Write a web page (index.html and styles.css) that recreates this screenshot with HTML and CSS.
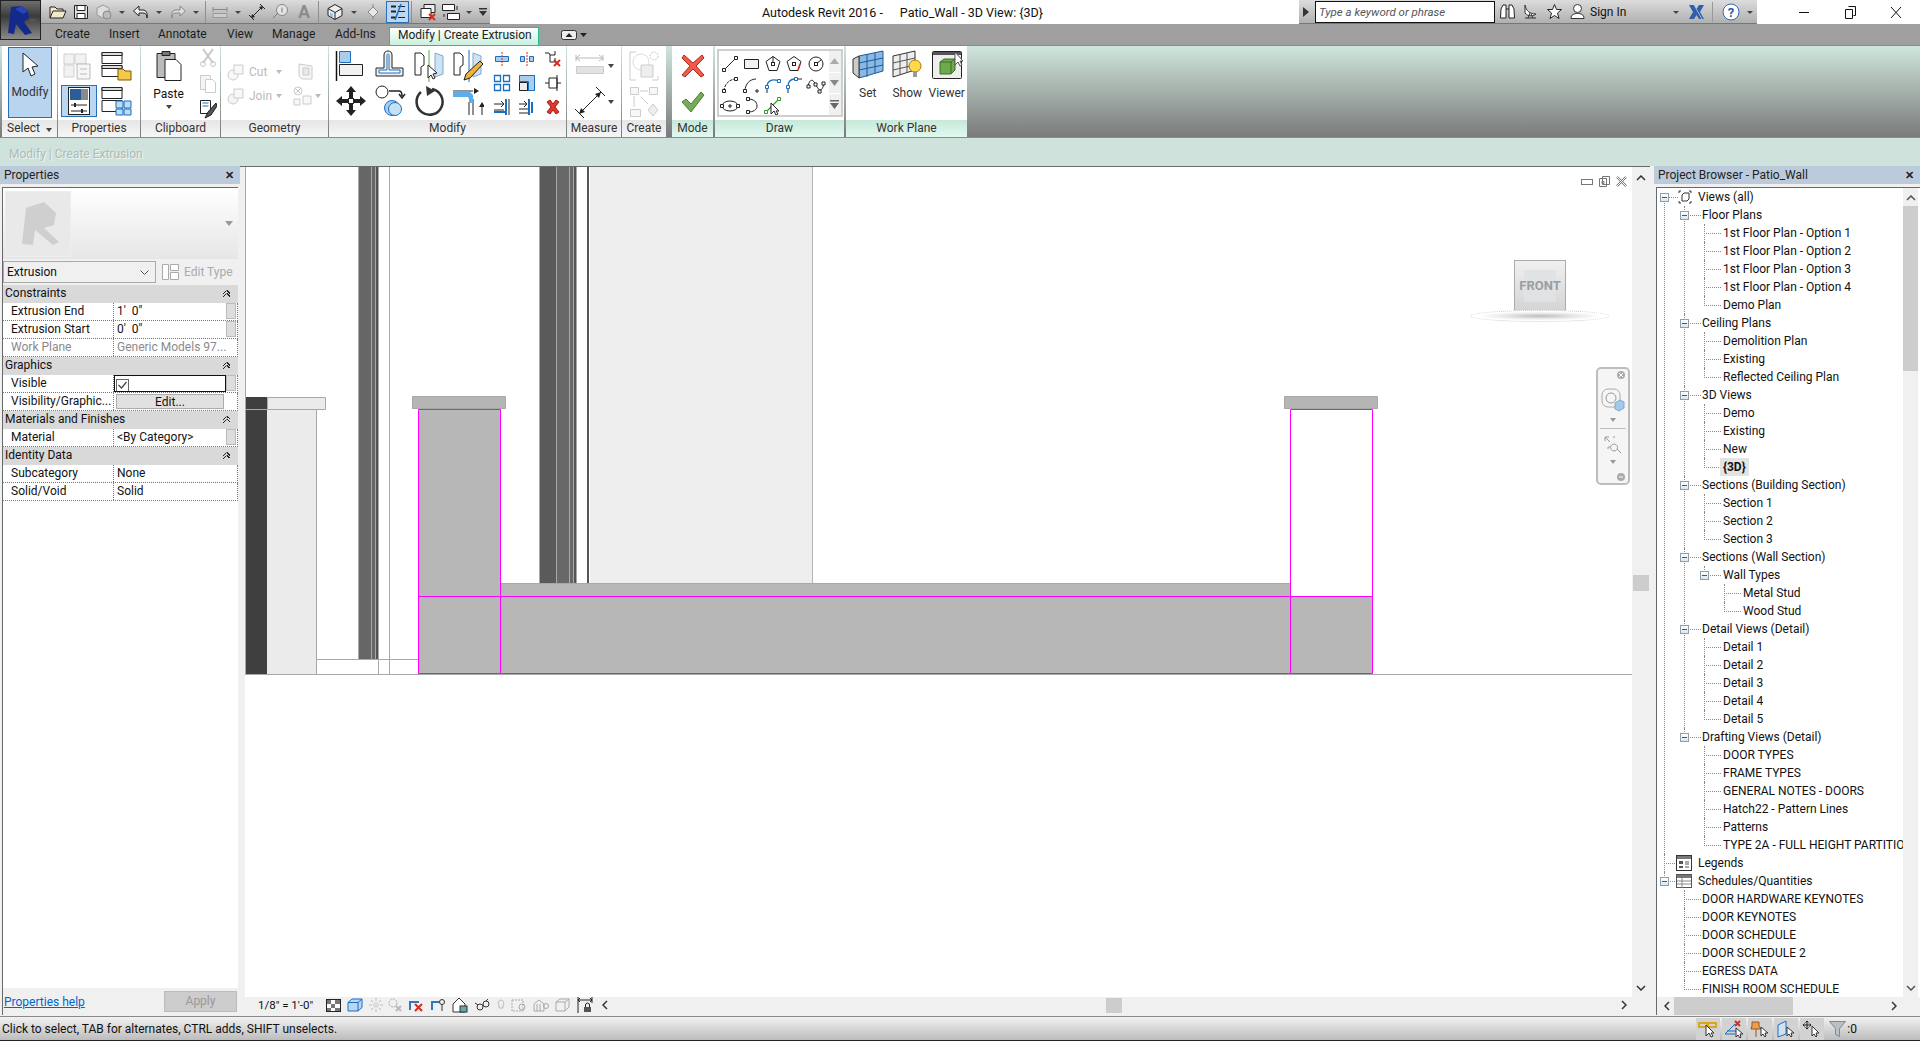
FILE: index.html
```html
<!DOCTYPE html>
<html lang="en">
<head>
  <meta charset="UTF-8">
  <title>Autodesk Revit 2016 - Patio_Wall</title>
  <link rel="stylesheet" href="styles.css">
</head>
<body>
  <!-- application button sits over title bar and tabs -->
  <div class="app-btn">
    <svg width="30" height="32" viewBox="0 0 30 32"><path d="M6 3l10-1 7 5 1 7-5 4 8 11-7 2-9-11-2 10-6-1z" fill="#13298c"/><path d="M10 5l6-3 7 5-5 3z" fill="#2a45b8"/></svg>
    <svg class="app-caret" width="8" height="5" viewBox="0 0 8 5"><path d="M0 0h8L4 5z" fill="#555"/></svg>
  </div>

  <div class="titlebar">
    <div class="qat">
      <span class="q"><svg width="18" height="16" viewBox="0 0 18 16"><path d="M1 14V3h5l2 2h6v2M1 14l3-7h13l-3 7z" fill="#f1e9c9" stroke="#222"/></svg></span>
      <span class="q"><svg width="16" height="16" viewBox="0 0 16 16"><path d="M1.500 1.500h12l1 1v12h-13z" fill="#dfe3e8" stroke="#222"/><path d="M4 1.500h8v5H4zM4 9.500h8v5H4z" fill="#fff" stroke="#222"/></svg></span>
      <span class="q"><svg width="18" height="18" viewBox="0 0 18 18"><path d="M2 5l6-3 6 3v7l-6 3-6-3z" fill="#ddd" stroke="#999"/><circle cx="12" cy="12" r="4" fill="#bbb" stroke="#888"/></svg></span>
      <span class="c"></span>
      <span class="q"><svg width="18" height="16" viewBox="0 0 18 16"><path d="M7 2L1.500 7 7 12V9h4c3 0 4 2 4 5 1-5-1-8-4-8H7z" fill="#eee" stroke="#222"/></svg></span>
      <span class="c"></span>
      <span class="q"><svg width="18" height="16" viewBox="0 0 18 16"><path d="M11 2l5.500 5L11 12V9H7c-3 0-4 2-4 5-1-5 1-8 4-8h4z" fill="#ddd" stroke="#888"/></svg></span>
      <span class="c"></span>
      <span class="qsep"></span>
      <span class="q"><svg width="18" height="16" viewBox="0 0 18 16"><path d="M2 3v5M16 3v5M2 5.500h14" stroke="#888" fill="none"/><path d="M2 9.500h14v4H2z" fill="#ccc" stroke="#999"/></svg></span>
      <span class="c"></span>
      <span class="q"><svg width="18" height="18" viewBox="0 0 18 18"><path d="M3 15L15 3M1 12l5 5M12 1l5 5" stroke="#222" fill="none"/><path d="M3 15l1-4 3 3zM15 3l-4 1 3 3z" fill="#222"/></svg></span>
      <span class="q q-w"><svg width="18" height="18" viewBox="0 0 18 18"><circle cx="11" cy="7" r="5.500" fill="#e4e4e4" stroke="#888"/><path d="M11 4.500v5M2 15l5-5" stroke="#777" fill="none"/></svg></span>
      <span class="q q-w q-a">A</span>
      <span class="qsep qsep-3d"></span>
      <span class="q q-w"><svg width="18" height="18" viewBox="0 0 18 18"><path d="M9 1.500l7 4v7l-7 4-7-4v-7z" fill="#eee" stroke="#222"/><path d="M2 5.500l7 4 7-4M9 9.500v7" stroke="#222" fill="none"/><path d="M4 9v4l3 2v-4z" fill="#9cc3e6"/></svg></span>
      <span class="c"></span>
      <span class="q"><svg width="18" height="18" viewBox="0 0 18 18"><path d="M9 4l5 5-5 5-5-5z" fill="#e8e8e8" stroke="#888"/><path d="M9 1v3M9 14v3" stroke="#888"/></svg></span>
      <span class="q q-on"><svg width="16" height="18" viewBox="0 0 16 18"><path d="M1 3.500h5M1 8.500h5M1 14.500h5" stroke="#222" stroke-width="2"/><path d="M8 3.500h7M8 8.500h7M8 14.500h7" stroke="#222"/><path d="M5 17L11 1" stroke="#1a6fc0" stroke-width="1.500"/></svg></span>
      <span class="qsep qsep-wide"></span>
      <span class="q"><svg width="18" height="18" viewBox="0 0 18 18"><path d="M5 1.500h11v8H5z" fill="#eee" stroke="#222"/><path d="M2 5.500h10v9H2z" fill="#fff" stroke="#222"/><path d="M10 11l6 6M16 11l-6 6" stroke="#d92c1c" stroke-width="2"/></svg></span>
      <span class="q"><svg width="20" height="18" viewBox="0 0 20 18"><path d="M1.500 1.500h12v6h-12zM6.500 10.500h12v6h-12z" fill="#fff" stroke="#222"/><path d="M16 3v4M3 14v-3" stroke="#222"/></svg></span>
      <span class="c"></span>
      <span class="q-custom"><svg width="10" height="10" viewBox="0 0 10 10"><path d="M1 1h8v1.500H1zM1 4h8L5 9z" fill="#333"/></svg></span>
    </div>
    <div class="title"><span>Autodesk Revit 2016 -</span><span>Patio_Wall - 3D View: {3D}</span></div>
    <div class="infocenter">
      <svg class="grip" width="6" height="10" viewBox="0 0 6 10"><path d="M0 0l6 5-6 5z" fill="#333"/></svg>
      <div class="search">Type a keyword or phrase</div>
      <span class="ib"><svg width="17" height="17" viewBox="0 0 17 17"><path d="M2 6l2-4h3v13H1.500zM15 6l-2-4h-3v13h5.500z" fill="#fff" stroke="#222"/><path d="M7 6h3" stroke="#222"/></svg></span>
      <span class="ib"><svg width="17" height="17" viewBox="0 0 17 17"><path d="M3 2c1 6 5 9 11 9-2 2-8 3-11-1zM3 15h11M8 10l-2 5M9 11l2 4" fill="#fff" stroke="#333"/></svg></span>
      <span class="ib"><svg width="17" height="17" viewBox="0 0 17 17"><path d="M8.500 1.500l2 5h5l-4 3.500 1.500 5.500-4.500-3-4.500 3L5.500 10l-4-3.500h5z" fill="#fff" stroke="#222"/></svg></span>
      <span class="ib"><svg width="17" height="17" viewBox="0 0 17 17"><circle cx="8.500" cy="5.500" r="4" fill="#fff" stroke="#333"/><path d="M2 15.500c0-4 3-5 6.500-5s6.500 1 6.500 5z" fill="#fff" stroke="#333"/></svg></span>
      <span class="signin">Sign In</span>
      <span class="ic"></span>
      <span class="ib ib-x"><svg width="17" height="16" viewBox="0 0 17 16"><path d="M1 1h5l2.500 4L11 1h5l-4 7 4 7h-5L8.500 11 6 15H1l4-7z" fill="#2f5fa8"/><path d="M6 1l8 14" stroke="#9bbbe2"/></svg></span>
      <span class="isep"></span>
      <span class="ib"><svg width="18" height="18" viewBox="0 0 18 18"><circle cx="9" cy="9" r="8" fill="#fff" stroke="#3a66b0"/><text x="9" y="13.500" class="help-q">?</text></svg></span>
      <span class="ic"></span>
    </div>
    <div class="winbtns">
      <span class="wb"><svg width="11" height="11" viewBox="0 0 11 11"><path d="M0 5.500h10" stroke="#111"/></svg></span>
      <span class="wb"><svg width="11" height="13" viewBox="0 0 11 13"><path d="M3.500.5h7v9h-2M.5 3.500h7v9h-7z" fill="none" stroke="#111"/></svg></span>
      <span class="wb"><svg width="12" height="13" viewBox="0 0 12 13"><path d="M1 1l10 11M11 1L1 12" stroke="#111" fill="none"/></svg></span>
    </div>
  </div>

  <div class="tabs">
    <span class="tab tab-create">Create</span>
    <span class="tab tab-insert">Insert</span>
    <span class="tab tab-annotate">Annotate</span>
    <span class="tab tab-view">View</span>
    <span class="tab tab-manage">Manage</span>
    <span class="tab tab-addins">Add-Ins</span>
    <span class="tab-active">Modify | Create Extrusion</span>
    <span class="tab-toggle"><svg width="16" height="10" viewBox="0 0 16 10"><rect x=".5" y=".5" width="15" height="9" rx="2" fill="#eee" stroke="#333"/><path d="M4.500 7l3.500-4 3.500 4z" fill="#222"/></svg></span>
    <svg width="7" height="4" viewBox="0 0 7 4"><path d="M0 0h7L3.500 4z" fill="#222"/></svg>
  </div>

  <div class="ribbon">
    <section class="panel p-select">
      <div class="panel-body">
        <div class="modify-btn">
          <svg width="18" height="26" viewBox="0 0 18 26"><path d="M2 1v19l5-4 3 8 4-2-3-7 6-1z" fill="#fff" stroke="#222"/></svg>
          <span>Modify</span>
        </div>
      </div>
      <div class="panel-title">Select <i class="mini-caret caret-select"></i></div>
    </section>

    <section class="panel p-props">
      <div class="panel-body props-grid">
        <span class="cell"><svg width="32" height="30" viewBox="0 0 32 30"><path d="M2 3h10v10H2zM13 3h11v10H13zM2 14h10v12H2z" fill="#f2f2f2" stroke="#cfcfcf"/><path d="M15 13h13v15H15z" fill="#f6f6f6" stroke="#bbb"/><path d="M18 18h7M18 23h7" stroke="#bbb"/></svg></span>
        <span class="cell"><svg width="32" height="30" viewBox="0 0 32 30"><path d="M2 1.500h20v11H2zM2 14.500h20v11H2z" fill="#fff" stroke="#222"/><path d="M2 1.500h20v3H2zM2 14.500h20v3H2z" fill="#ddd" stroke="#222"/><path d="M18 18h5l2 2h6v9H18z" fill="#f2c94c" stroke="#7a5b00"/></svg></span>
        <span class="cell cell-on"><svg width="24" height="30" viewBox="0 0 24 30"><rect x="1.500" y="1.500" width="21" height="27" fill="#fff" stroke="#222"/><path d="M3 3h18v11H3z" fill="#2c5d9a"/><path d="M14 3h7v11h-7z" fill="#8a8a8a"/><path d="M4 19h16M4 25h16" stroke="#222"/><path d="M8 17v4M15 23v4" stroke="#222" stroke-width="2"/></svg></span>
        <span class="cell"><svg width="32" height="30" viewBox="0 0 32 30"><path d="M2 1.500h20v11H2zM2 14.500h20v11H2z" fill="#fff" stroke="#222"/><path d="M2 1.500h20v3H2z" fill="#ddd" stroke="#222"/><path d="M16 15h7v7h-7zM24 15h7v7h-7zM16 23h7v6h-7zM24 23h7v6h-7z" fill="#bcdcf5" stroke="#1a6fc0"/></svg></span>
      </div>
      <div class="panel-title">Properties</div>
    </section>

    <section class="panel p-clip">
      <div class="panel-body clip-row">
        <div class="paste">
          <svg width="28" height="32" viewBox="0 0 28 32"><path d="M2 3.500h18v24H2z" fill="#bbb" stroke="#222"/><path d="M7 1.500h8v4H7z" fill="#777" stroke="#222"/><path d="M10 9.500h11l5 5v16H10z" fill="#fff" stroke="#222"/></svg>
          <span>Paste</span>
          <i class="mini-caret"></i>
        </div>
        <div class="clip-col">
          <svg width="18" height="20" viewBox="0 0 18 20"><path d="M4 1l10 14M14 1L4 15" stroke="#c8c8c8" stroke-width="2" fill="none"/><circle cx="4" cy="16" r="2.500" fill="none" stroke="#c8c8c8"/><circle cx="14" cy="16" r="2.500" fill="none" stroke="#c8c8c8"/></svg>
          <svg width="18" height="20" viewBox="0 0 18 20"><path d="M1.500 1.500h10v14h-10z" fill="#f4f4f4" stroke="#ccc"/><path d="M6.500 5.500h7l3 3v10h-10z" fill="#fff" stroke="#ccc"/></svg>
          <svg width="18" height="20" viewBox="0 0 18 20"><path d="M1.500 1.500h10v13h-10z" fill="#fff" stroke="#222"/><path d="M3.500 4h6M3.500 7h6" stroke="#1a6fc0"/><path d="M17 4l-8 9-3 6 6-3 6-9z" fill="#555" stroke="#222"/></svg>
        </div>
      </div>
      <div class="panel-title">Clipboard</div>
    </section>

    <section class="panel p-geo">
      <div class="panel-body geo-grid">
        <span class="geo-item"><svg width="18" height="18" viewBox="0 0 18 18"><circle cx="6" cy="12" r="5" fill="#f8f8f8" stroke="#ccc"/><path d="M7 2h9v9H7z" fill="#f8f8f8" stroke="#ccc"/></svg><span>Cut</span><i class="mini-caret off"></i></span>
        <span class="cell"><svg width="18" height="20" viewBox="0 0 18 20"><path d="M2 2l13 2v13L5 17 2 14z" fill="#f5f5f5" stroke="#ccc"/><path d="M6 6h6v7H6z" fill="#e8e8e8" stroke="#ccc"/></svg></span>
        <span class="geo-item"><svg width="18" height="18" viewBox="0 0 18 18"><circle cx="6" cy="12" r="5" fill="#f4f4f4" stroke="#ccc"/><path d="M7 2h9v9H7z" fill="#f8f8f8" stroke="#ccc"/></svg><span>Join</span><i class="mini-caret off"></i></span>
        <span class="cell cell-caret"><svg width="20" height="20" viewBox="0 0 20 20"><circle cx="6" cy="5" r="4" fill="none" stroke="#ccc"/><path d="M3 2l6 6M9 2L3 8" stroke="#ccc"/><path d="M2 13h6v6H2zM11 10h8v8h-8z" fill="#f7f7f7" stroke="#ccc"/></svg><i class="mini-caret off"></i></span>
      </div>
      <div class="panel-title">Geometry</div>
    </section>

    <section class="panel p-mod">
      <div class="panel-body mod-row">
        <div class="mod-big">
          <span class="cell"><svg width="32" height="32" viewBox="0 0 32 32"><path d="M1.500 1v30" stroke="#111" stroke-width="1.500"/><path d="M4.500 1.500h11v11h-11z" fill="#a9cdec" stroke="#1a6fc0"/><path d="M4.500 14.500h23v11h-23z" fill="#f2f2f2" stroke="#222"/></svg></span>
          <span class="cell"><svg width="32" height="32" viewBox="0 0 32 32"><path d="M2 26v-8h8V5c0-3 2-4 4-4s4 1 4 4v13h11v8z" fill="#eee" stroke="#222"/><path d="M5 23v-3h8V6c0-1 0-2 1-2s1 1 1 2v14h11v3z" fill="#fff" stroke="#1a6fc0"/></svg></span>
          <span class="cell"><svg width="32" height="32" viewBox="0 0 32 32"><path d="M2 3h6l3 3v9l-3 2v8H2z" fill="#fff" stroke="#222"/><path d="M22 3l8 3v18l-8 3z" fill="#cfe3f4" stroke="#7ea8cf"/><path d="M16 0v32" stroke="#4fae3b"/><path d="M15 15v13l3-3 2 4 2-1-2-4 4-1z" fill="#fff" stroke="#222"/></svg></span>
          <span class="cell"><svg width="32" height="32" viewBox="0 0 32 32"><path d="M2 3h6l3 3v9l-3 2v8H2z" fill="#fff" stroke="#222"/><path d="M21 3l8 3v18l-8 3z" fill="#cfe3f4" stroke="#7ea8cf"/><path d="M17 0v32" stroke="#1a6fc0"/><path d="M12 30l2-6 14-13 3 3-13 14z" fill="#f2b13a" stroke="#222"/></svg></span>
          <span class="cell"><svg width="32" height="32" viewBox="0 0 32 32"><path d="M16 1l5 6h-3v7h7v-3l6 5-6 5v-3h-7v7h3l-5 6-5-6h3v-7H7v3l-6-5 6-5v3h7V7h-3z" fill="#222"/><rect x="13.500" y="13.500" width="5" height="5" fill="#fff" stroke="#222"/></svg></span>
          <span class="cell"><svg width="32" height="32" viewBox="0 0 32 32"><circle cx="8" cy="7" r="6" fill="#fff" stroke="#222"/><path d="M15 6h10c2 0 3 2 3 5M25 9l3 4 3-4" fill="none" stroke="#222" stroke-width="1.500"/><circle cx="18" cy="23" r="7.500" fill="#a9cdec" stroke="#1a6fc0"/><circle cx="21" cy="24" r="6.500" fill="#c7e0f4" stroke="#1a6fc0"/></svg></span>
          <span class="cell"><svg width="32" height="32" viewBox="0 0 32 32"><path d="M19 4A13 13 0 1 1 8 7" fill="none" stroke="#333" stroke-width="2.500"/><path d="M13 1l9 5-8 5z" fill="#333"/></svg></span>
          <span class="cell"><svg width="32" height="32" viewBox="0 0 32 32"><path d="M1 6h20M1 10h12M21 14v16M17 17v13" stroke="#222" fill="none"/><path d="M1 6h16l4 4v8h-4v-4l-1-2H1z" fill="#5daee8"/><path d="M22 3l5 3-5 3zM27 22l3-5 3 5z" fill="#222"/><path d="M30 20v10" stroke="#222"/></svg></span>
        </div>
        <div class="mod-small">
          <span class="cell"><svg width="16" height="16" viewBox="0 0 16 16"><path d="M1.500 5.500h13v5h-13z" fill="#a9cdec" stroke="#1a6fc0"/><path d="M8 1v14" stroke="#d92c1c" stroke-dasharray="2 1"/></svg></span>
          <span class="cell"><svg width="16" height="16" viewBox="0 0 16 16"><path d="M1.500 5.500h4v5h-4zM10.500 5.500h4v5h-4z" fill="#a9cdec" stroke="#1a6fc0"/><path d="M8 1v14" stroke="#d92c1c" stroke-dasharray="2 1"/></svg></span>
          <span class="cell"><svg width="18" height="18" viewBox="0 0 18 18"><path d="M1 3h4l1 2h5V1M6 5v7h5V8" fill="none" stroke="#222"/><path d="M10 10l6 6M16 10l-6 6" stroke="#d92c1c" stroke-width="2"/></svg></span>
          <span class="cell"><svg width="18" height="18" viewBox="0 0 18 18"><path d="M1.500 1.500h6v6h-6zM10.500 1.500h6v6h-6zM1.500 10.500h6v6h-6zM10.500 10.500h6v6h-6z" fill="#fff" stroke="#1a6fc0" stroke-width="1.300"/></svg></span>
          <span class="cell"><svg width="18" height="18" viewBox="0 0 18 18"><path d="M1.500 1.500h15v15h-15z" fill="#fff" stroke="#1a6fc0"/><path d="M1.500 1.500h15v15h-6v-9h-9z" fill="#a9cdec" stroke="#1a6fc0"/><path d="M1.500 8.500h8v8h-8z" fill="#eee" stroke="#222"/></svg></span>
          <span class="cell"><svg width="18" height="18" viewBox="0 0 18 18"><path d="M1 9h4M13 9h4M5 4h8v10H5z" fill="none" stroke="#222"/><path d="M13 1v16" stroke="#222"/></svg></span>
          <span class="cell"><svg width="18" height="18" viewBox="0 0 18 18"><path d="M1 6h10M8 3l3 3-3 3M1 12h10" stroke="#222" fill="none"/><path d="M1 14h11" stroke="#1a6fc0" stroke-width="2"/><path d="M13 1v16" stroke="#1a6fc0" stroke-width="2"/><path d="M16 1v16" stroke="#222"/></svg></span>
          <span class="cell"><svg width="18" height="18" viewBox="0 0 18 18"><path d="M1 6h8M6 3l3 3-3 3M1 11h10M1 15h10" stroke="#222" fill="none"/><path d="M11 1v16M14 4v11" stroke="#1a6fc0" stroke-width="2"/></svg></span>
          <span class="cell"><svg width="16" height="16" viewBox="0 0 16 16"><path d="M2 3l3-2 3 4 3-4 3 2-4 5 4 5-3 2-3-4-3 4-3-2 4-5z" fill="#e0362b" stroke="#a61d14"/></svg></span>
        </div>
      </div>
      <div class="panel-title">Modify</div>
    </section>

    <section class="panel p-measure">
      <div class="panel-body measure-col">
        <span class="cell cell-caret"><svg width="30" height="30" viewBox="0 0 30 30"><path d="M1 7h27M1 4v6M28 4v6M5 4L1 7l4 3M24 4l4 3-4 3" stroke="#bbb" fill="none"/><path d="M1.500 15.500h27v7h-27z" fill="#e2e2e2" stroke="#ccc"/></svg><i class="mini-caret"></i></span>
        <span class="cell cell-caret"><svg width="30" height="32" viewBox="0 0 30 32"><path d="M4 28L26 6M0 23l9 9M21 1l9 9" stroke="#222" fill="none"/><path d="M4 28l2-6 4 4zM26 6l-6 2 4 4z" fill="#222"/></svg><i class="mini-caret"></i></span>
      </div>
      <div class="panel-title">Measure</div>
    </section>

    <section class="panel p-create">
      <div class="panel-body measure-col">
        <span class="cell"><svg width="32" height="32" viewBox="0 0 32 32"><path d="M8 2H2v28h6M24 30h6V26" fill="none" stroke="#ccc"/><circle cx="13" cy="12" r="8" fill="none" stroke="#ddd"/><path d="M13 15h12v12H13z" fill="#eee" stroke="#ccc"/><circle cx="26" cy="6" r="4" fill="none" stroke="#ccc" stroke-dasharray="2 1"/></svg></span>
        <span class="cell"><svg width="30" height="32" viewBox="0 0 30 32"><path d="M1.500 1.500h8v7h-8zM20.500 1.500h8v7h-8zM1.500 23.500h10v7h-10z" fill="#f7f7f7" stroke="#ccc"/><path d="M11 5h8M5 10v11M12 11l7 7" stroke="#ccc" fill="none"/><path d="M24 18l5 6-5 6-5-6z" fill="#eee" stroke="#ccc"/></svg></span>
      </div>
      <div class="panel-title">Create</div>
    </section>

    <section class="panel p-mode">
      <div class="panel-body measure-col">
        <span class="cell"><svg width="24" height="24" viewBox="0 0 24 24"><path d="M3 1l9 8 9-8 2 3-8 8 8 9-3 2-8-8-8 8-3-2 8-9-8-8z" fill="#f05a4b" stroke="#b02a1e"/></svg></span>
        <span class="cell"><svg width="24" height="22" viewBox="0 0 24 22"><path d="M1 11l4-3 5 5L20 1l3 3-13 17z" fill="#77ab5c" stroke="#4d7d36"/></svg></span>
      </div>
      <div class="panel-title panel-title-on">Mode</div>
    </section>

    <section class="panel p-draw">
      <div class="panel-body draw-body">
        <div class="gallery">
          <div class="gallery-grid">
            <svg width="18" height="18" viewBox="0 0 18 18"><path d="M3 15L15 3" stroke="#222"/><path d="M1.500 13.500h3v3h-3zM13.500 1.500h3v3h-3z" fill="#fff" stroke="#222"/></svg>
            <svg width="18" height="18" viewBox="0 0 18 18"><path d="M2.500 4.500h14v9h-14z" fill="#f2f2f2" stroke="#222"/></svg>
            <svg width="18" height="18" viewBox="0 0 18 18"><path d="M9 1.500l7 5-3 9H5l-3-9z" fill="#fff" stroke="#222"/><path d="M9 9V1.500" stroke="#222"/><rect x="7.500" y="7.500" width="3" height="3" fill="#fff" stroke="#222"/></svg>
            <svg width="18" height="18" viewBox="0 0 18 18"><path d="M9 1.500l7 5-3 9H5l-3-9z" fill="#fff" stroke="#222"/><rect x="7.500" y="7.500" width="3" height="3" fill="#fff" stroke="#222"/><path d="M15 9l-2 6" stroke="#d92c1c" stroke-width="1.500"/></svg>
            <svg width="18" height="18" viewBox="0 0 18 18"><circle cx="9" cy="9" r="7" fill="#fff" stroke="#222"/><path d="M9 9l5-4" stroke="#222"/><rect x="7.500" y="7.500" width="3" height="3" fill="#fff" stroke="#222"/></svg>
            <svg width="18" height="18" viewBox="0 0 18 18"><path d="M3 15C3 9 8 3 15 3" fill="none" stroke="#222" stroke-dasharray="3 1"/><path d="M1.500 13.500h3v3h-3zM13.500 1.500h3v3h-3z" fill="#fff" stroke="#222"/></svg>
            <svg width="18" height="18" viewBox="0 0 18 18"><path d="M3 15C3 8 8 3 14 3" fill="none" stroke="#222"/><path d="M1.500 13.500h3v3h-3z" fill="#fff" stroke="#222"/><path d="M13 15h4M15 13v4" stroke="#222"/></svg>
            <svg width="18" height="18" viewBox="0 0 18 18"><path d="M3 11C3 5 8 2 15 5" fill="none" stroke="#1a6fc0" stroke-width="1.300"/><path d="M1.500 9.500h3v3h-3zM13.500 3.500h3v3h-3z" fill="#fff" stroke="#1a6fc0"/><path d="M3 13v4" stroke="#222"/></svg>
            <svg width="18" height="18" viewBox="0 0 18 18"><path d="M3 11C3 6 5 3 10 3" fill="none" stroke="#1a6fc0" stroke-width="1.300"/><path d="M1.500 9.500h3v3h-3zM9.500 1.500h3v3h-3z" fill="#fff" stroke="#1a6fc0"/><path d="M3 13v4M13 3h4" stroke="#222"/></svg>
            <svg width="20" height="18" viewBox="0 0 20 18"><path d="M2 10C4 2 7 3 10 9s6 8 8-2" fill="none" stroke="#222"/><path d="M1 9h3v3H1zM8 7h3v3H8zM16 6h3v3h-3zM12 14h3v3h-3z" fill="#fff" stroke="#222"/></svg>
            <svg width="20" height="16" viewBox="0 0 20 16"><ellipse cx="10" cy="8" rx="8" ry="5" fill="#fff" stroke="#222"/><path d="M8 8h4M10 6v4" stroke="#222"/><path d="M0.500 6.500h3v3h-3zM16.500 6.500h3v3h-3z" fill="#fff" stroke="#222"/></svg>
            <svg width="18" height="18" viewBox="0 0 18 18"><path d="M6 2c6 0 9 3 9 7s-4 6-9 6" fill="none" stroke="#222"/><path d="M4.500 .5h3v3h-3zM4.500 13.500h3v3h-3z" fill="#fff" stroke="#222"/></svg>
            <svg width="20" height="18" viewBox="0 0 20 18"><path d="M3 15L16 2" stroke="#2ea02e" stroke-width="1.300"/><path d="M1.500 13.500h3v3h-3zM14.500 .5h3v3h-3z" fill="#fff" stroke="#2ea02e"/><path d="M8 6v11l3-3 2 4 2-1-2-3h3z" fill="#fff" stroke="#222"/></svg>
          </div>
          <div class="gallery-scroll">
            <span><svg width="9" height="6" viewBox="0 0 9 6"><path d="M0 6l4.500-6L9 6z" fill="#aaa"/></svg></span>
            <span><svg width="9" height="6" viewBox="0 0 9 6"><path d="M0 0l4.500 6L9 0z" fill="#888"/></svg></span>
            <span><svg width="9" height="9" viewBox="0 0 9 9"><path d="M0 0h9v1.500H0zM0 3h9L4.500 9z" fill="#666"/></svg></span>
          </div>
        </div>
      </div>
      <div class="panel-title panel-title-on">Draw</div>
    </section>

    <section class="panel p-plane">
      <div class="panel-body plane-row">
        <div class="plane-btn">
          <svg width="32" height="30" viewBox="0 0 32 30"><path d="M7 6l24-5v20L7 28z" fill="#8cb9e3" stroke="#1a5a9a"/><path d="M1 9l6-3v22l-6-5z" fill="#ccc" stroke="#333"/><path d="M15 4v23M23 3v20M7 13l24-5M7 20l24-5" stroke="#1a5a9a" fill="none"/></svg>
          <span>Set</span>
        </div>
        <div class="plane-btn">
          <svg width="32" height="30" viewBox="0 0 32 30"><path d="M2 6l22-5v19L2 27z" fill="#eee" stroke="#333"/><path d="M9 5v20M16 3v20M2 13l22-5M2 20l22-5" stroke="#555" fill="none"/><circle cx="24" cy="16" r="6" fill="#ffd84d" stroke="#a37f00"/><path d="M22 22h4v5h-4z" fill="#999"/></svg>
          <span>Show</span>
        </div>
        <div class="plane-btn">
          <svg width="32" height="30" viewBox="0 0 32 30"><rect x="1.500" y="1.500" width="29" height="27" rx="1" fill="#eee" stroke="#222"/><path d="M2 2h28v3H2z" fill="#555"/><path d="M9 12l4-3h11v11l-4 4H9z" fill="#6ea94d" stroke="#3e6b28"/><path d="M9 12h11v12M20 12l4-3" fill="none" stroke="#3e6b28"/><path d="M24 2v13l3-3 2 4 2-1-2-4h3z" fill="#fff" stroke="#555"/></svg>
          <span>Viewer</span>
        </div>
      </div>
      <div class="panel-title panel-title-on">Work Plane</div>
    </section>
  </div>

  <div class="optionsbar">Modify | Create Extrusion</div>

  <div class="workspace">
    <aside class="props">
      <div class="dock-head"><span>Properties</span><b class="dock-x">✕</b></div>
      <div class="props-inner">
        <div class="preview">
          <div class="preview-thumb">
            <svg width="46" height="46" viewBox="0 0 46 46"><path d="M11 7l18-6 12 11-2 12-10 3 15 14-6 3-18-15-2 15-11-1z" fill="#cfcfcf"/></svg>
          </div>
          <svg class="preview-caret" width="8" height="5" viewBox="0 0 8 5"><path d="M0 0h8L4 5z" fill="#999"/></svg>
        </div>
        <div class="typeline">
          <div class="typeselect"><span>Extrusion</span><svg width="9" height="5" viewBox="0 0 9 5"><path d="M.5.5l4 4 4-4" fill="none" stroke="#555"/></svg></div>
          <div class="edittype"><svg width="17" height="16" viewBox="0 0 17 16"><path d="M.5.500h6v15h-6zM8.500.500h8v6h-8zM8.500 8.500h8v7h-8z" fill="#fff" stroke="#aaa"/></svg><span>Edit Type</span></div>
        </div>

        <div class="group">Constraints<i class="dbl"></i></div>
        <div class="prop"><span class="pn">Extrusion End</span><span class="pv">1'&nbsp; 0"</span><span class="pb"><i></i></span></div>
        <div class="prop"><span class="pn">Extrusion Start</span><span class="pv">0'&nbsp; 0"</span><span class="pb"><i></i></span></div>
        <div class="prop prop-off"><span class="pn">Work Plane</span><span class="pv">Generic Models 97...</span><span class="pb"></span></div>
        <div class="group">Graphics<i class="dbl"></i></div>
        <div class="prop"><span class="pn">Visible</span><span class="pv pv-check"><svg width="13" height="13" viewBox="0 0 13 13"><rect x=".5" y=".5" width="12" height="12" fill="#fff" stroke="#666"/><path d="M2.500 6l3 3 5-6" fill="none" stroke="#444" stroke-width="1.200"/></svg></span><span class="pb"><i></i></span></div>
        <div class="prop"><span class="pn">Visibility/Graphic...</span><span class="pv pv-btn"><span>Edit...</span></span><span class="pb"></span></div>
        <div class="group">Materials and Finishes<i class="dbl"></i></div>
        <div class="prop"><span class="pn">Material</span><span class="pv">&lt;By Category&gt;</span><span class="pb"><i></i></span></div>
        <div class="group">Identity Data<i class="dbl"></i></div>
        <div class="prop"><span class="pn">Subcategory</span><span class="pv">None</span><span class="pb"></span></div>
        <div class="prop"><span class="pn">Solid/Void</span><span class="pv">Solid</span><span class="pb"></span></div>

        <div class="props-foot">
          <a class="help-link">Properties help</a>
          <span class="apply">Apply</span>
        </div>
      </div>
    </aside>

    <main class="view">
      <div class="view-main">
        <div class="canvas">
          <svg class="drawing" width="1387" height="830" viewBox="245 167 1387 830">
            <rect x="245" y="167" width="1387" height="830" fill="#fff"/>
            <!-- far left column -->
            <path d="M246 397h21v277h-21z" fill="#3f3f3f"/>
            <path d="M267 409h49v265h-49z" fill="#ebebeb"/>
            <path d="M267.500 397.500h58v12h-58z" fill="#ebebeb" stroke="#a8a8a8"/>
            <path d="M246 409.500h21M316.500 409v265M245.500 167v507" stroke="#a8a8a8" fill="none"/>
            <!-- dark mullions -->
            <path d="M358 167h13v492h-13z" fill="#666"/>
            <path d="M372 167h3v492h-3z" fill="#666"/>
            <path d="M376 167h2v492h-2z" fill="#555"/>
            <path d="M358.500 167v492M371.500 167v492M375.500 167v492M378.500 167v507M389.500 167v507M316 659.500h102" stroke="#a8a8a8" fill="none"/>
            <path d="M539 167h17v416h-17z" fill="#5a5a5a"/>
            <path d="M557 167h12v416h-12z" fill="#686868"/>
            <path d="M570 167h3v416h-3z" fill="#686868"/>
            <path d="M574 167h2v416h-2z" fill="#555"/>
            <path d="M539.500 167v416M556.500 167v416M569.500 167v416M573.500 167v416M576.500 167v416" stroke="#a8a8a8" fill="none"/>
            <path d="M587 167h2v416h-2z" fill="#555"/>
            <path d="M590 167h222v416H590z" fill="#eee"/>
            <path d="M812.500 167v416" stroke="#b5b5b5"/>
            <!-- wall and posts -->
            <path d="M500 583h790v14H500z" fill="#b7b7b7"/>
            <path d="M500 583.500h790" stroke="#a8a8a8"/>
            <path d="M418 409h83v265h-83zM500 596h790v78H500zM1290 596h83v78h-83z" fill="#b7b7b7"/>
            <path d="M412.500 396.500h93v12h-93zM1284.500 396.500h93v12h-93z" fill="#b5b5b5" stroke="#a8a8a8"/>
            <path d="M245 674.500h1387" stroke="#a8a8a8"/>
            <path d="M418.500 409.500h82v264h-82zM418.500 596.500h954M1290.500 409.500h82v264h-82zM500.500 673.500h790" fill="none" stroke="#f0f"/>
          </svg>
          <div class="viewctl">
            <svg width="12" height="6" viewBox="0 0 12 6"><rect x=".5" y=".5" width="11" height="5" fill="#fff" stroke="#777"/></svg>
            <svg width="11" height="11" viewBox="0 0 11 11"><path d="M3.500.5h7v8h-7zM.5 2.500h7v8h-7z" fill="#fff" stroke="#777"/><path d="M3 5.500h2v2H3z" fill="none" stroke="#777"/></svg>
            <svg width="11" height="11" viewBox="0 0 11 11"><path d="M1 1l9 9M10 1l-9 9" stroke="#777" stroke-width="2.400"/><path d="M1 1l9 9M10 1l-9 9" stroke="#fff"/></svg>
          </div>
          <div class="navcube">
            <div class="cube"><span>FRONT</span></div>
            <div class="compass"></div>
          </div>
          <div class="navbar">
            <svg class="nb-close" width="8" height="8" viewBox="0 0 8 8"><circle cx="4" cy="4" r="4" fill="#aaa"/><path d="M2 2l4 4M6 2L2 6" stroke="#fff"/></svg>
            <svg width="24" height="24" viewBox="0 0 24 24"><rect x="1" y="1" width="18" height="18" rx="6" fill="none" stroke="#aaa"/><circle cx="10" cy="10" r="5" fill="none" stroke="#999"/><path d="M14 15l5-3 4 2v6l-5 3-4-2z" fill="#a6c8ea" stroke="#7ea8cf"/></svg>
            <i class="nb-caret"></i>
            <span class="nb-line"></span>
            <svg width="18" height="18" viewBox="0 0 18 18"><path d="M1 5V1h4M1 1l5 5M11 1h-2M6 11H4v2M10 8a3.500 3.500 0 1 0 .1 0M13 13l4 4" fill="none" stroke="#999"/></svg>
            <i class="nb-caret"></i>
            <svg class="nb-min" width="8" height="8" viewBox="0 0 8 8"><circle cx="4" cy="4" r="4" fill="#aaa"/><path d="M2 4h4" stroke="#fff"/></svg>
          </div>
        </div>
        <div class="vscroll">
          <svg width="10" height="6" viewBox="0 0 10 6"><path d="M1 5l4-4 4 4" fill="none" stroke="#333" stroke-width="1.500"/></svg>
          <span class="vthumb"></span>
          <svg width="10" height="6" viewBox="0 0 10 6"><path d="M1 1l4 4 4-4" fill="none" stroke="#333" stroke-width="1.500"/></svg>
        </div>
      </div>
      <div class="viewbar">
        <span class="scale">1/8" = 1'-0"</span>
        <div class="vb-icons">
          <svg width="15" height="13" viewBox="0 0 15 13"><rect x=".5" y=".5" width="14" height="12" fill="#fff" stroke="#222"/><path d="M1 1h4v4H1zM9 1h5v4H9zM5 5h4v4H5zM1 9h4v3H1zM9 9h5v3H9z" fill="#777"/></svg>
          <svg width="16" height="14" viewBox="0 0 16 14"><path d="M1 4.500l4-3.500h10v8.500L11 13H1z" fill="#b8d8f2" stroke="#1a6fc0"/><path d="M1 4.500h10V13M11 4.500L15 1" fill="none" stroke="#1a6fc0"/></svg>
          <svg width="14" height="14" viewBox="0 0 14 14"><circle cx="7" cy="7" r="3" fill="#ddd"/><path d="M7 0v3M7 11v3M0 7h3M11 7h3M2 2l2 2M10 10l2 2M12 2l-2 2M2 12l2-2" stroke="#bbb"/></svg>
          <svg width="14" height="14" viewBox="0 0 14 14"><circle cx="5" cy="5" r="4" fill="none" stroke="#aaa" stroke-dasharray="2 1"/><path d="M8 8l5 5M13 8l-5 5" stroke="#bbb" stroke-width="2"/></svg>
          <svg width="16" height="14" viewBox="0 0 16 14"><path d="M1 3h10v2H3v7H1z" fill="#3377bb"/><path d="M7 6l7 7M14 6l-7 7" stroke="#d92c1c" stroke-width="2"/></svg>
          <svg width="16" height="14" viewBox="0 0 16 14"><path d="M1 3h8v2H3v7H1z" fill="#3377bb"/><circle cx="12" cy="4" r="2.500" fill="none" stroke="#333"/><path d="M12 7v6" stroke="#333"/></svg>
          <svg width="16" height="16" viewBox="0 0 16 16"><path d="M1 7l6-6 6 6v8H1z" fill="#fff" stroke="#333"/><rect x="8" y="9" width="7" height="6" fill="#6aa" stroke="#333"/></svg>
          <svg width="16" height="14" viewBox="0 0 16 14"><circle cx="6" cy="9" r="3" fill="none" stroke="#333"/><circle cx="12" cy="6" r="3" fill="none" stroke="#333"/><path d="M1 5l3 2M14 1l-2 2" stroke="#333"/></svg>
          <svg width="10" height="14" viewBox="0 0 10 14"><path d="M5 2a3 3 0 0 1 2 5v3H3V7a3 3 0 0 1 2-5z" fill="none" stroke="#bbb"/></svg>
          <svg width="16" height="14" viewBox="0 0 16 14"><path d="M1 2h11v11H1z" fill="none" stroke="#aaa" stroke-dasharray="2 1"/><circle cx="11" cy="9" r="3" fill="none" stroke="#aaa"/></svg>
          <svg width="16" height="14" viewBox="0 0 16 14"><path d="M1 13V6l5-4 5 4v7zM4 6v7M7 6v7" fill="none" stroke="#aaa"/><circle cx="13" cy="8" r="2.500" fill="none" stroke="#aaa"/></svg>
          <svg width="16" height="14" viewBox="0 0 16 14"><path d="M1 4l4-3h9v8l-4 4H1z" fill="none" stroke="#aaa"/><path d="M1 4h9v9M10 4l4-3" fill="none" stroke="#aaa"/></svg>
          <svg width="16" height="16" viewBox="0 0 16 16"><path d="M1 0v16M15 0v6M1 3h14M3 1L1 3l2 2M13 1l2 2-2 2" fill="none" stroke="#222"/><rect x="7" y="10" width="7" height="5" fill="#555"/><path d="M8.500 10V8a2 2 0 0 1 4 0v2" fill="none" stroke="#222"/></svg>
        </div>
        <svg class="hs-left" width="6" height="10" viewBox="0 0 6 10"><path d="M5 1L1 5l4 4" fill="none" stroke="#333" stroke-width="1.500"/></svg>
        <span class="hthumb"></span>
        <svg class="hs-right" width="6" height="10" viewBox="0 0 6 10"><path d="M1 1l4 4-4 4" fill="none" stroke="#333" stroke-width="1.500"/></svg>
        <span class="corner"></span>
      </div>
    </main>

    <aside class="browser">
      <div class="dock-head"><span>Project Browser - Patio_Wall</span><b class="dock-x">✕</b></div>
      <div class="browser-inner">
        <div class="tree-wrap">
          <ul class="tree root">
            <li class="open"><div class="row"><i class="tg"></i><svg class="ti" width="14" height="14" viewBox="0 0 14 14"><path d="M1 3V1h2M11 1h2v2M1 11v2h2M13 11v2h-2" fill="none" stroke="#333"/><path d="M4 5l2-2h5v6l-2 2H4z" fill="#fff" stroke="#333"/></svg><span>Views (all)</span></div>
              <ul class="tree">
                <li class="open"><div class="row"><i class="tg"></i><span>Floor Plans</span></div>
                  <ul class="tree">
                    <li><div class="row"><span>1st Floor Plan - Option 1</span></div></li>
                    <li><div class="row"><span>1st Floor Plan - Option 2</span></div></li>
                    <li><div class="row"><span>1st Floor Plan - Option 3</span></div></li>
                    <li><div class="row"><span>1st Floor Plan - Option 4</span></div></li>
                    <li><div class="row"><span>Demo Plan</span></div></li>
                  </ul>
                </li>
                <li class="open"><div class="row"><i class="tg"></i><span>Ceiling Plans</span></div>
                  <ul class="tree">
                    <li><div class="row"><span>Demolition Plan</span></div></li>
                    <li><div class="row"><span>Existing</span></div></li>
                    <li><div class="row"><span>Reflected Ceiling Plan</span></div></li>
                  </ul>
                </li>
                <li class="open"><div class="row"><i class="tg"></i><span>3D Views</span></div>
                  <ul class="tree">
                    <li><div class="row"><span>Demo</span></div></li>
                    <li><div class="row"><span>Existing</span></div></li>
                    <li><div class="row"><span>New</span></div></li>
                    <li><div class="row"><span class="current">{3D}</span></div></li>
                  </ul>
                </li>
                <li class="open"><div class="row"><i class="tg"></i><span>Sections (Building Section)</span></div>
                  <ul class="tree">
                    <li><div class="row"><span>Section 1</span></div></li>
                    <li><div class="row"><span>Section 2</span></div></li>
                    <li><div class="row"><span>Section 3</span></div></li>
                  </ul>
                </li>
                <li class="open"><div class="row"><i class="tg"></i><span>Sections (Wall Section)</span></div>
                  <ul class="tree">
                    <li class="open"><div class="row"><i class="tg"></i><span>Wall Types</span></div>
                      <ul class="tree">
                        <li><div class="row"><span>Metal Stud</span></div></li>
                        <li><div class="row"><span>Wood Stud</span></div></li>
                      </ul>
                    </li>
                  </ul>
                </li>
                <li class="open"><div class="row"><i class="tg"></i><span>Detail Views (Detail)</span></div>
                  <ul class="tree">
                    <li><div class="row"><span>Detail 1</span></div></li>
                    <li><div class="row"><span>Detail 2</span></div></li>
                    <li><div class="row"><span>Detail 3</span></div></li>
                    <li><div class="row"><span>Detail 4</span></div></li>
                    <li><div class="row"><span>Detail 5</span></div></li>
                  </ul>
                </li>
                <li class="open"><div class="row"><i class="tg"></i><span>Drafting Views (Detail)</span></div>
                  <ul class="tree">
                    <li><div class="row"><span>DOOR TYPES</span></div></li>
                    <li><div class="row"><span>FRAME TYPES</span></div></li>
                    <li><div class="row"><span>GENERAL NOTES - DOORS</span></div></li>
                    <li><div class="row"><span>Hatch22 - Pattern Lines</span></div></li>
                    <li><div class="row"><span>Patterns</span></div></li>
                    <li><div class="row"><span>TYPE 2A - FULL HEIGHT PARTITION</span></div></li>
                  </ul>
                </li>
              </ul>
            </li>
            <li><div class="row"><svg class="ti ti-gap" width="16" height="16" viewBox="0 0 16 16"><rect x=".5" y=".5" width="15" height="15" fill="#fff" stroke="#333"/><path d="M1 1h14v3H1z" fill="#777"/><path d="M3 6h4v3H3zM3 11h4v2H3z" fill="#555"/><path d="M9 7h4M9 9h4M9 12h4" stroke="#555"/></svg><span>Legends</span></div></li>
            <li class="open"><div class="row"><i class="tg"></i><svg class="ti ti-gap" width="16" height="14" viewBox="0 0 16 14"><rect x=".5" y=".5" width="15" height="13" fill="#fff" stroke="#555"/><path d="M1 1h14v3H1z" fill="#777"/><path d="M1 7h14M1 10h14M6 4v10" stroke="#888"/></svg><span>Schedules/Quantities</span></div>
              <ul class="tree">
                <li><div class="row"><span>DOOR HARDWARE KEYNOTES</span></div></li>
                <li><div class="row"><span>DOOR KEYNOTES</span></div></li>
                <li><div class="row"><span>DOOR SCHEDULE</span></div></li>
                <li><div class="row"><span>DOOR SCHEDULE 2</span></div></li>
                <li><div class="row"><span>EGRESS DATA</span></div></li>
                <li><div class="row"><span>FINISH ROOM SCHEDULE</span></div></li>
              </ul>
            </li>
          </ul>
          <div class="tree-vs">
            <svg width="10" height="6" viewBox="0 0 10 6"><path d="M1 5l4-4 4 4" fill="none" stroke="#555" stroke-width="1.500"/></svg>
            <span class="tree-thumb"></span>
            <svg class="tree-down" width="10" height="6" viewBox="0 0 10 6"><path d="M1 1l4 4 4-4" fill="none" stroke="#555" stroke-width="1.500"/></svg>
          </div>
        </div>
        <div class="tree-hs">
          <svg width="6" height="10" viewBox="0 0 6 10"><path d="M5 1L1 5l4 4" fill="none" stroke="#333" stroke-width="1.500"/></svg>
          <span class="tree-hthumb"></span>
          <svg class="hs-right" width="6" height="10" viewBox="0 0 6 10"><path d="M1 1l4 4-4 4" fill="none" stroke="#333" stroke-width="1.500"/></svg>
        </div>
      </div>
    </aside>
  </div>

  <footer class="statusbar">
    <span class="status-text">Click to select, TAB for alternates, CTRL adds, SHIFT unselects.</span>
    <div class="status-tools">
      <span class="st"><svg width="20" height="18" viewBox="0 0 20 18"><path d="M1 3h8v4H1zM10 3h8v4h-8z" fill="none" stroke="#d9a520" stroke-width="2"/><path d="M8 5v11l3-3 2 4 2-1-2-3h3z" fill="#fff" stroke="#333"/></svg></span>
      <span class="st"><svg width="20" height="18" viewBox="0 0 20 18"><path d="M1 14L11 4M1 14h10M3 11h9" stroke="#1a6fc0" fill="none"/><path d="M11 1l5 5M16 1l-5 5" stroke="#d92c1c" stroke-width="2"/><path d="M12 8v9l2-2 2 3 1-1-1-3h3z" fill="#fff" stroke="#333"/></svg></span>
      <span class="st"><svg width="20" height="18" viewBox="0 0 20 18"><path d="M2 2h7v4l2 3H1l1-3zM6 9v8" fill="#e8a050" stroke="#a5521a"/><path d="M11 7v9l2-2 2 3 1-1-1-3h3z" fill="#fff" stroke="#333"/></svg></span>
      <span class="st"><svg width="20" height="18" viewBox="0 0 20 18"><path d="M2 5l8-4v13l-8 3z" fill="#cfe3f4" stroke="#1a6fc0"/><path d="M11 7v9l2-2 2 3 1-1-1-3h3z" fill="#fff" stroke="#333"/></svg></span>
      <span class="st"><svg width="20" height="18" viewBox="0 0 20 18"><path d="M5 1v8M1 5h8M5 1L3.500 2.500M5 1l1.500 1.500M1 5l1.500-1.500M1 5l1.500 1.500M9 5L7.500 3.500M9 5L7.500 6.500M5 9L3.500 7.500M5 9l1.500-1.500" stroke="#222" fill="none"/><path d="M10 6v10l2-2 2 3 1-1-1-3h3z" fill="#fff" stroke="#333"/></svg></span>
      <span class="st-filter"><svg width="17" height="16" viewBox="0 0 17 16"><path d="M.5.500h16l-6 7v8l-4-2V7.500z" fill="#b9c0c6" stroke="#808890"/></svg><span>:0</span></span>
    </div>
  </footer>
</body>
</html>
```

FILE: styles.css
```css
* {
  box-sizing: border-box;
}
html, body {
  margin: 0;
  height: 100%;
}
body {
  width: 1920px;
  height: 1041px;
  overflow: hidden;
  display: flex;
  flex-direction: column;
  position: relative;
  font-family: Roboto, "Liberation Sans", sans-serif;
  font-size: 12px;
  color: #111;
  background: #f0f0f0;
}
svg {
  display: block;
  flex: none;
}
ul, li {
  list-style: none;
  margin: 0;
  padding: 0;
}

/* app button */
.app-btn {
  position: absolute;
  left: 0;
  top: 0;
  width: 41px;
  height: 40px;
  background: linear-gradient(#6d6d6d, #3b3b3b 40%, #8a8a8a);
  border: 1px solid #222;
  z-index: 3;
  padding: 3px 0 0 4px;
}
.app-caret {
  position: absolute;
  right: 3px;
  top: 18px;
}

/* title bar */
.titlebar {
  height: 24px;
  display: flex;
  background: #fff;
  padding-left: 41px;
}
.qat {
  width: 449px;
  height: 24px;
  display: flex;
  align-items: center;
  padding-left: 5px;
  background: linear-gradient(#dcdcdc, #ababab);
  border-bottom: 1px solid #777;
}
.q {
  width: 23px;
  height: 22px;
  display: flex;
  align-items: center;
  justify-content: center;
}
.q-w {
  width: 24px;
}
.q-a {
  font-size: 18px;
  font-weight: 700;
  color: #8c8c8c;
}
.q-on {
  margin-left: 2px;
  background: #bcd7f1;
  border: 1px solid #2a6fb5;
}
.c {
  width: 14px;
  height: 22px;
  position: relative;
}
.c::after, .ic::after {
  content: "";
  position: absolute;
  left: 4px;
  top: 10px;
  border: 3px solid transparent;
  border-top: 3px solid #444;
}
.qsep {
  width: 5px;
  height: 22px;
  background: linear-gradient(90deg, transparent 2px, #8f8f8f 2px, #8f8f8f 3px, transparent 3px);
}
.qsep-3d {
  width: 7px;
}
.qsep-wide {
  width: 7px;
}
.q-custom {
  width: 14px;
  display: flex;
  justify-content: center;
}
.title {
  margin-left: 272px;
  display: flex;
  gap: 17px;
  align-items: center;
  font-size: 12.500px;
  white-space: nowrap;
  width: 265px;
}
.infocenter {
  margin-left: 272px;
  width: 458px;
  height: 24px;
  display: flex;
  align-items: center;
  padding-left: 2px;
  background: linear-gradient(#dcdcdc, #b0b0b0);
  border-bottom: 1px solid #777;
}
.grip {
  margin: 0 6px 0 2px;
}
.search {
  width: 181px;
  height: 22px;
  background: #fff;
  border: 1px solid #111;
  padding: 3px 3px;
  font-style: italic;
  color: #555;
  font-size: 11.500px;
  margin-right: 1px;
}
.ib {
  width: 23.500px;
  display: flex;
  justify-content: center;
}
.signin {
  width: 80px;
  padding-left: 1px;
}
.ic {
  width: 14px;
  height: 22px;
  position: relative;
}
.ib-x {
  margin-left: 2px;
}
.isep {
  width: 1px;
  height: 20px;
  background: #999;
  margin: 0 7px 0 4px;
}
.help-q {
  font-size: 13px;
  font-weight: 700;
  fill: #2d5aa6;
  text-anchor: middle;
}
.winbtns {
  display: flex;
  padding-left: 24px;
}
.wb {
  width: 46px;
  height: 24px;
  display: flex;
  align-items: center;
  justify-content: center;
}

/* tabs */
.tabs {
  height: 21px;
  background: #9f9f9f;
  display: flex;
  align-items: center;
  position: relative;
  padding-left: 388px;
}
.tab {
  position: absolute;
  top: 3px;
  color: #1c1c1c;
}
.tab-create { left: 55px; }
.tab-insert { left: 109px; }
.tab-annotate { left: 158px; }
.tab-view { left: 227px; }
.tab-manage { left: 272px; }
.tab-addins { left: 335px; }
.tab-active {
  width: 150px;
  height: 18px;
  margin-top: 3px;
  margin-left: 1px;
  padding: 0 0 0 8px;
  background: linear-gradient(#fff, #c9efde);
  border: 1px solid #1fc28a;
  border-bottom: none;
  color: #222;
  white-space: nowrap;
}
.tab-toggle {
  margin: 0 3px 0 22px;
}

/* ribbon */
.ribbon {
  height: 93px;
  display: flex;
  gap: 1px;
  padding-left: 2px;
  background: linear-gradient(#cfe6dc, #7a7a7a);
  border-top: 1px solid #1fc28a;
  border-bottom: 1px solid #1fc28a;
}
.panel {
  display: flex;
  flex-direction: column;
  background: #fff;
}
.p-select { width: 55px; }
.p-props { width: 82px; }
.p-clip { width: 79px; }
.p-geo { width: 107px; }
.p-mod { width: 237px; }
.p-measure { width: 54px; }
.p-create { width: 44px; }
.p-mode { width: 41px; margin-left: 5px; }
.p-draw { width: 129px; margin-left: 1px; }
.p-plane { width: 121px; margin-left: 1px; }
.panel-body {
  height: 74px;
}
.panel-title {
  height: 17px;
  background: linear-gradient(#e6e6e6, #f6f6f6);
  text-align: center;
  color: #333;
  line-height: 17px;
}
.panel-title-on {
  background: linear-gradient(#c6e8d9, #e2f9ef);
}
.mini-caret {
  display: inline-block;
  width: 0;
  height: 0;
  border: 3.500px solid transparent;
  border-top: 4px solid #444;
  border-bottom: none;
}
.mini-caret.off {
  border-top-color: #bbb;
}
.caret-select {
  margin-left: 3px;
}
.cell {
  display: flex;
  align-items: center;
  justify-content: center;
}
.cell-caret {
  gap: 3px;
}

.modify-btn {
  width: 44px;
  height: 71px;
  margin: 1px 0 0 6px;
  background: #b9d4ef;
  border: 1px solid #2a6fb5;
  display: flex;
  flex-direction: column;
  align-items: center;
  padding-top: 4px;
  gap: 7px;
  color: #333;
}

.props-grid {
  display: grid;
  grid-template-columns: 38px 38px;
  grid-template-rows: 35px 35px;
  padding: 2px 0 0 1px;
}
.cell-on {
  background: #bcd7f1;
  border: 1px solid #2a6fb5;
  margin: 2px 0 1px 2px;
}

.clip-row {
  display: flex;
}
.paste {
  width: 54px;
  display: flex;
  flex-direction: column;
  align-items: center;
  padding: 4px 0 0 1px;
  gap: 5px;
}
.paste .mini-caret {
  margin-top: -1px;
}
.clip-col {
  width: 25px;
  display: flex;
  flex-direction: column;
  align-items: center;
  justify-content: space-between;
  padding: 2px 0 1px;
}

.geo-grid {
  display: grid;
  grid-template-columns: 60px 38px;
  grid-template-rows: 24px 24px;
  padding: 14px 0 0 6px;
}
.geo-item {
  display: flex;
  align-items: center;
  gap: 4px;
  color: #bbb;
}
.geo-item span {
  width: 23px;
}

.mod-row {
  display: flex;
  padding-left: 2px;
}
.mod-big {
  display: grid;
  grid-template-columns: repeat(4, 39px);
  grid-template-rows: 35px 35px;
  padding-top: 2px;
}
.mod-small {
  display: grid;
  grid-template-columns: repeat(3, 25.500px);
  grid-template-rows: repeat(3, 24px);
  padding-top: 1px;
  margin-left: 2px;
}

.measure-col {
  display: grid;
  grid-template-rows: 35px 37px;
  padding-top: 2px;
}

.draw-body {
  padding: 3px 0 0 2px;
}
.gallery {
  width: 126px;
  height: 68px;
  border: 2px solid #cfcfcf;
  display: flex;
}
.gallery-grid {
  width: 108px;
  display: grid;
  grid-template-columns: repeat(5, 21.500px);
  grid-auto-rows: 21px;
  align-items: center;
  justify-items: center;
  padding-top: 2px;
}
.gallery-scroll {
  width: 14px;
  margin-left: 2px;
  display: flex;
  flex-direction: column;
  gap: 1px;
}
.gallery-scroll span {
  flex: 1;
  background: #f0f0f0;
  display: flex;
  align-items: center;
  justify-content: center;
}

.plane-row {
  display: flex;
  padding: 4px 0 0 2px;
}
.plane-btn {
  width: 39.500px;
  display: flex;
  flex-direction: column;
  align-items: center;
  gap: 6px;
  color: #333;
}

/* options bar */
.optionsbar {
  height: 28px;
  background: #d0e2dc;
  color: #aebcb7;
  text-shadow: 1px 1px 0 #eef5f2;
  line-height: 32px;
  padding-left: 9px;
}

.workspace {
  flex: 1;
  display: flex;
  min-height: 0;
}

/* docked palettes */
.dock-head {
  height: 18px;
  margin-top: 0;
  background: #bccbdc;
  display: flex;
  align-items: center;
  justify-content: space-between;
  padding: 0 6px 0 4px;
  color: #222;
}
.dock-x {
  font-size: 11px;
  font-weight: 700;
}
.props {
  width: 240px;
  display: flex;
  flex-direction: column;
}
.props-inner {
  flex: 1;
  margin: 3px 2px 1px 2px;
  background: #fff;
  border-top: 1px solid #696969;
  border-left: 1px solid #696969;
  display: flex;
  flex-direction: column;
}
.preview {
  height: 71px;
  display: flex;
  align-items: center;
  justify-content: space-between;
  padding-right: 5px;
  background: linear-gradient(#fff, #e6e6e6);
}
.preview-thumb {
  width: 66px;
  height: 66px;
  margin-left: 2px;
  background: #e9e9e9;
  display: flex;
  align-items: center;
  justify-content: center;
  border: 1px solid #eee;
}
.typeline {
  height: 26px;
  display: flex;
  align-items: center;
  background: #f0f0f0;
}
.typeselect {
  width: 153px;
  height: 22px;
  background: #f0f0f0;
  border: 1px solid #aaa;
  display: flex;
  align-items: center;
  justify-content: space-between;
  padding: 0 6px 0 3px;
}
.edittype {
  display: flex;
  gap: 5px;
  align-items: center;
  color: #aaa;
  margin-left: 6px;
}
.group {
  height: 18px;
  background: #d9d9d9;
  padding: 1px 0 0 2px;
  position: relative;
}
.dbl {
  position: absolute;
  right: 8px;
  top: 5px;
  width: 7px;
  height: 7px;
  background:
    linear-gradient(135deg, transparent 45%, #222 45%, #222 60%, transparent 60%) left top / 50% 4px no-repeat,
    linear-gradient(225deg, transparent 45%, #222 45%, #222 60%, transparent 60%) right top / 50% 4px no-repeat,
    linear-gradient(135deg, transparent 45%, #222 45%, #222 60%, transparent 60%) left bottom / 50% 4px no-repeat,
    linear-gradient(225deg, transparent 45%, #222 45%, #222 60%, transparent 60%) right bottom / 50% 4px no-repeat;
}
.prop {
  height: 18px;
  display: grid;
  grid-template-columns: 111px 112px 11px;
  border-bottom: 1px dotted #777;
  border-right: 1px dotted #777;
}
.pn {
  padding: 1px 0 0 8px;
  border-right: 1px dotted #777;
  white-space: nowrap;
  overflow: hidden;
}
.pv {
  padding: 1px 0 0 3px;
  white-space: nowrap;
  overflow: hidden;
}
.prop-off .pn, .prop-off .pv {
  color: #8a8a8a;
}
.pb i {
  display: block;
  width: 10px;
  height: 16px;
  background: #ddd;
  border: 1px solid #bbb;
}
.pv-check {
  border: 1px solid #111;
  padding: 3px 0 0 1px;
  height: 17px;
}
.pv-btn {
  padding: 1px;
}
.pv-btn span {
  display: block;
  height: 15px;
  line-height: 15px;
  margin: 0 1px;
  background: #e1e1e1;
  border: 1px solid #adadad;
  text-align: center;
}
.props-foot {
  margin-top: auto;
  height: 27px;
  background: #f0f0f0;
  display: flex;
  align-items: center;
  justify-content: space-between;
  padding: 0 1px 0 1px;
}
.help-link {
  color: #0066cc;
  text-decoration: underline;
}
.apply {
  width: 73px;
  height: 21px;
  background: #cccccc;
  border: 1px solid #bbb;
  text-align: center;
  line-height: 19px;
  color: #999;
}

/* view */
.view {
  width: 1410px;
  display: flex;
  flex-direction: column;
  padding-left: 5px;
  margin-left: 0;
  border-top: 1px solid #696969;
}
.view-main {
  height: 830px;
  display: flex;
}
.canvas {
  width: 1387px;
  position: relative;
  overflow: hidden;
}
.vscroll {
  width: 18px;
  background: #f0f0f0;
  display: flex;
  flex-direction: column;
  align-items: center;
  padding: 8px 0 6px;
  position: relative;
  justify-content: space-between;
}
.vthumb {
  position: absolute;
  top: 408px;
  left: 1px;
  width: 16px;
  height: 16px;
  background: #cdcdcd;
}
.viewctl {
  position: absolute;
  right: 5px;
  top: 9px;
  display: flex;
  gap: 6px;
  align-items: center;
}
.navcube {
  position: absolute;
  left: 1225px;
  top: 93px;
  width: 140px;
  height: 70px;
  display: flex;
  flex-direction: column;
  align-items: center;
}
.cube {
  width: 52px;
  height: 52px;
  background: linear-gradient(#f0f0f0, #d4d4d4);
  border: 1px solid #aaa;
  display: flex;
  align-items: center;
  justify-content: center;
}
.cube span {
  width: 32px;
  height: 32px;
  line-height: 32px;
  text-align: center;
  background: #e0e2e4;
  color: #9a9ea3;
  font-weight: 700;
  font-size: 13px;
  white-space: nowrap;
  display: flex;
  justify-content: center;
}
.compass {
  width: 140px;
  height: 12px;
  margin-top: -2px;
  border: 1px dotted #ccc;
  border-radius: 50%;
  background: radial-gradient(ellipse at center, #bdbdbd 0, #e6e6e6 35%, #fff 62%);
}
.navbar {
  position: absolute;
  left: 1351px;
  top: 200px;
  width: 34px;
  height: 118px;
  background: #f5f5f5;
  border: 2px solid #bdbdbd;
  border-radius: 5px;
  display: flex;
  flex-direction: column;
  align-items: center;
  padding: 2px 0;
}
.nb-close, .nb-min {
  align-self: flex-end;
  margin-right: 3px;
}
.navbar svg:nth-child(2) {
  margin-top: 9px;
}
.nb-caret {
  margin-top: 6px;
  border: 3.500px solid transparent;
  border-top: 4px solid #999;
  border-bottom: none;
}
.nb-line {
  width: 26px;
  height: 1px;
  background: #bdbdbd;
  margin: 6px 0 7px;
}
.nb-min {
  margin-top: auto;
}
.viewbar {
  height: 19px;
  display: flex;
  align-items: center;
  background: #f0f0f0;
  position: relative;
  padding-bottom: 3px;
}
.scale {
  margin-left: 13px;
  width: 65px;
  font-size: 11.500px;
  white-space: nowrap;
}
.vb-icons {
  display: flex;
  align-items: center;
  width: 275px;
  justify-content: space-between;
  padding: 0 5px 0 3px;
}
.hs-left {
  margin-left: 4px;
}
.hthumb {
  position: absolute;
  left: 861px;
  top: 1px;
  width: 16px;
  height: 15px;
  background: #cdcdcd;
}
.hs-right {
  margin-left: auto;
}
.corner {
  width: 23px;
}

/* project browser */
.browser {
  width: 266px;
  margin-left: 4px;
  display: flex;
  flex-direction: column;
}
.browser-inner {
  flex: 1;
  margin: 3px 0 1px 2px;
  border-top: 1px solid #696969;
  border-left: 1px solid #696969;
  display: flex;
  flex-direction: column;
  min-height: 0;
}
.tree-wrap {
  flex: 1;
  display: flex;
  background: #fff;
  min-height: 0;
}
.root {
  width: 246px;
  overflow: hidden;
  padding: 0 0 0 7px;
  height: 809px;
}
.tree {
  margin-left: 20px;
}
.root {
  margin-left: 0;
}
.tree li {
  position: relative;
}
.tree li::before {
  content: "";
  position: absolute;
  left: 0;
  top: 0;
  width: 16px;
  height: 9px;
  border-left: 1px dotted #8a8a8a;
  border-bottom: 1px dotted #8a8a8a;
}
.tree li::after {
  content: "";
  position: absolute;
  left: 0;
  top: 9px;
  bottom: 0;
  border-left: 1px dotted #8a8a8a;
}
.tree li:last-child::after {
  display: none;
}
.root > li:first-child::before {
  border-left: none;
}
.row {
  height: 18px;
  padding-left: 18px;
  display: flex;
  align-items: center;
  white-space: nowrap;
  position: relative;
  z-index: 1;
}
.tree .tree .tree .row {
  padding-left: 19px;
}
.tg {
  position: absolute;
  left: -4px;
  top: 5px;
  width: 9px;
  height: 9px;
  background: linear-gradient(#fff, #dfe5ea);
  border: 1px solid #8aa0b0;
}
.tg::after {
  content: "";
  position: absolute;
  left: 1px;
  top: 3px;
  width: 5px;
  height: 1px;
  background: #2a5f90;
}
.ti {
  margin: 0 6px 0 -4px;
  background: #fff;
}
.ti-gap {
  margin-left: -6px;
}
.current {
  font-weight: 700;
  background: #e3e3e3;
  padding: 0 3px;
  margin-left: -3px;
  height: 18px;
  line-height: 18px;
}
.tree-vs {
  width: 15px;
  background: #f0f0f0;
  display: flex;
  flex-direction: column;
  align-items: center;
  padding-top: 7px;
  height: 809px;
}
.tree-thumb {
  width: 15px;
  height: 165px;
  margin-top: 5px;
  background: #cdcdcd;
}
.tree-down {
  margin-top: auto;
  margin-bottom: 6px;
}
.tree-hs {
  height: 18px;
  background: #f0f0f0;
  display: flex;
  align-items: center;
  padding: 0 23px 0 7px;
  gap: 0;
}
.tree-hthumb {
  width: 119px;
  height: 18px;
  margin-left: 4px;
  background: #cdcdcd;
}

/* status bar */
.statusbar {
  height: 25px;
  background: linear-gradient(#f2f2f2, #bcbcbc);
  border-top: 1px solid #8a8a8a;
  border-bottom: 1px solid #222;
  display: flex;
  align-items: center;
  justify-content: space-between;
  padding: 0 63px 0 2px;
}
.status-tools {
  display: flex;
  gap: 2px;
}
.st {
  width: 24px;
  height: 22px;
  background: #d2d2d2;
  display: flex;
  align-items: center;
  justify-content: center;
}
.st-filter {
  display: flex;
  align-items: center;
  gap: 1px;
  margin-left: 3px;
}
```
